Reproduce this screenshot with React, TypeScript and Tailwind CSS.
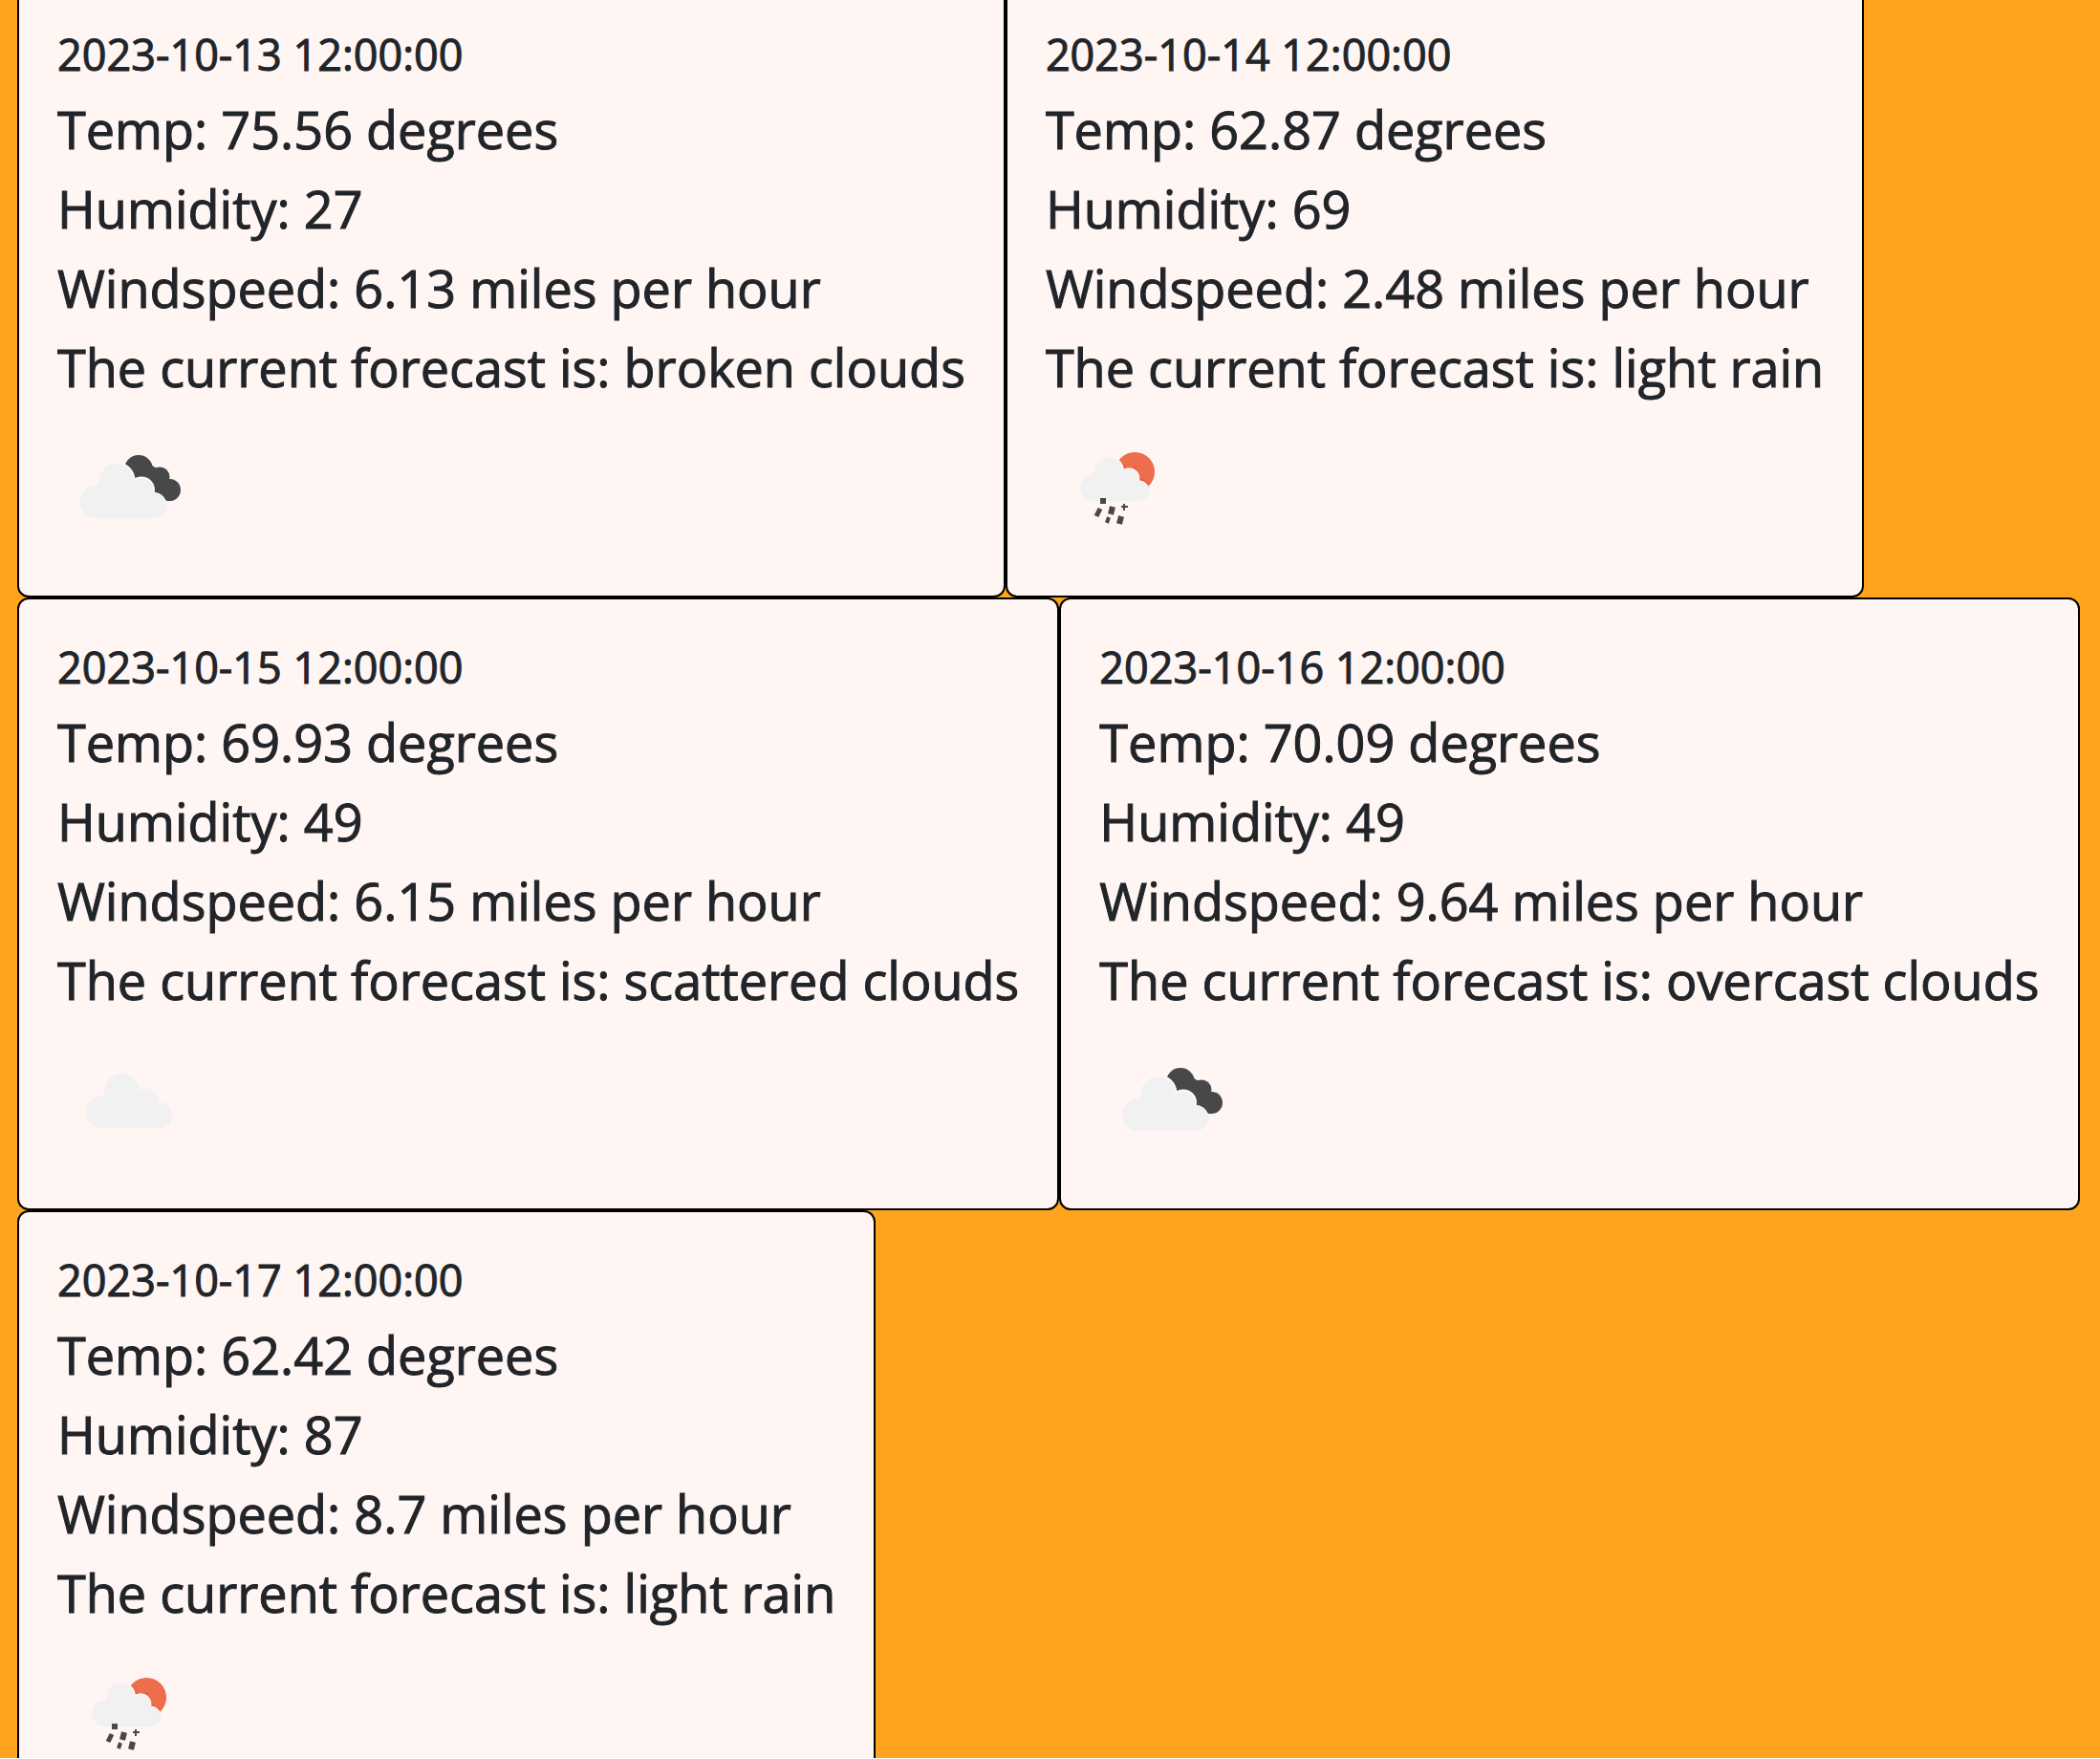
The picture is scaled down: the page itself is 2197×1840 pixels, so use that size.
import React from 'react';

type Sky = 'broken' | 'rain' | 'scattered';

interface Day {
  date: string;
  temp: string;
  humidity: number;
  wind: string;
  forecast: string;
  sky: Sky;
}

const days: Day[] = [
  { date: '2023-10-13 12:00:00', temp: '75.56', humidity: 27, wind: '6.13', forecast: 'broken clouds', sky: 'broken' },
  { date: '2023-10-14 12:00:00', temp: '62.87', humidity: 69, wind: '2.48', forecast: 'light rain', sky: 'rain' },
  { date: '2023-10-15 12:00:00', temp: '69.93', humidity: 49, wind: '6.15', forecast: 'scattered clouds', sky: 'scattered' },
  { date: '2023-10-16 12:00:00', temp: '70.09', humidity: 49, wind: '9.64', forecast: 'overcast clouds', sky: 'broken' },
  { date: '2023-10-17 12:00:00', temp: '62.42', humidity: 87, wind: '8.7', forecast: 'light rain', sky: 'rain' },
];

function CloudShape() {
  return (
    <>
      <circle cx="47" cy="88" r="17" />
      <circle cx="67.5" cy="66" r="18" />
      <circle cx="94" cy="75.5" r="12" />
      <circle cx="107" cy="91.5" r="13.5" />
      <path d="M47 71 L50 66 L84 64 L104 79 L110 105 L47 105 Z" />
    </>
  );
}

function Cloud({ transform, halo }: { transform?: string; halo?: string }) {
  return (
    <g transform={transform}>
      {halo && (
        <g fill={halo} stroke={halo} strokeWidth="4">
          <circle cx="67.5" cy="66" r="18" />
          <circle cx="94" cy="75.5" r="12" />
          <circle cx="106" cy="92" r="12" />
        </g>
      )}
      <g fill="#f1f1f1">
        <CloudShape />
      </g>
    </g>
  );
}

function WeatherIcon({ sky, label }: { sky: Sky; label: string }) {
  return (
    <svg className="block size-[150px]" viewBox="0 0 150 150" role="img" aria-label={label}>
      {sky === 'scattered' && <Cloud />}
      {sky === 'broken' && (
        <>
          <g fill="#48484a">
            <circle cx="85" cy="57" r="15" />
            <circle cx="107" cy="65" r="10.5" />
            <circle cx="117.5" cy="78.5" r="11.5" />
            <path d="M70 52 L90 48 L106 57 L118 72 L116 90 L98 82 L80 68 Z" />
          </g>
          <Cloud transform="translate(-6 3)" halo="#fff8f6" />
        </>
      )}
      {sky === 'rain' && (
        <>
          <circle cx="93.3" cy="59.7" r="20.7" fill="#ec6e4c" />
          <path d="M76 48 L83 58 L93 57 L98 68 L107 73" fill="none" stroke="#ec5530" strokeWidth="4" />
          <Cloud transform="translate(12 6) scale(0.8)" halo="#fff5f2" />
          <g stroke="#48484a" fill="none">
            <path strokeWidth="6" d="M60 87 L60 93" />
            <path strokeWidth="5" d="M57 98 L53 106" />
            <path strokeWidth="6" d="M70 96 L68 104" />
            <path strokeWidth="2" d="M82 93 L82 100 M79 96 L86 96" />
            <path strokeWidth="4" d="M66 107 L64 113" />
            <path strokeWidth="6" d="M79 106 L77 114" />
          </g>
        </>
      )}
    </svg>
  );
}

function ForecastCard({ day }: { day: Day }) {
  const line = 'mb-4 text-[54px] leading-[67px]';
  return (
    <article className="rounded-xl border-2 border-black bg-[#fff5f2] px-10 pt-[41px] pb-[39px] whitespace-nowrap">
      <h2 className="mb-4 text-[45px] leading-[59px]">{day.date}</h2>
      <p className={line}>Temp: {day.temp} degrees</p>
      <p className={line}>Humidity: {day.humidity}</p>
      <p className={line}>Windspeed: {day.wind} miles per hour</p>
      <p className={line}>The current forecast is: {day.forecast}</p>
      <WeatherIcon sky={day.sky} label={day.forecast} />
    </article>
  );
}

export default function App() {
  return (
    <main className="h-screen overflow-hidden border-b border-white bg-[#ffa41c] px-[18px] font-['Open_Sans',sans-serif] font-medium text-[#212529] [-webkit-text-stroke:1px_#212529]">
      <section className="-mt-4 flex flex-wrap items-start">
        {days.map((day) => (
          <ForecastCard key={day.date} day={day} />
        ))}
      </section>
    </main>
  );
}
